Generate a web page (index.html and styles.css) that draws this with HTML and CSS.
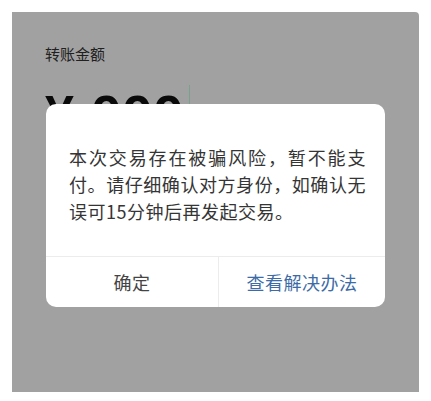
FILE: index.html
```html
<!DOCTYPE html>
<html>
<head>
	<meta charset="utf-8">
	<meta name="viewport" content="width=device-width, initial-scale=1">
	<title>转账</title>
	<link rel="stylesheet" href="styles.css">
</head>
<body>

	<div class="screen">
		<div class="transfer">
			<p class="label">转账金额</p>
			<div class="amount">
				<span class="num">¥ 999</span>
				<span class="cursor"></span>
			</div>
		</div>

		<!-- risk warning dialog -->
		<div class="mask">
			<div class="dialog">
				<div class="message">
					<span class="line full">本次交易存在被骗风险，暂不能支</span>
					<span class="line full">付。请仔细确认对方身份，如确认无</span>
					<span class="line">误可15分钟后再发起交易。</span>
				</div>
				<div class="actions">
					<button class="btn">确定</button>
					<button class="btn primary">查看解决办法</button>
				</div>
			</div>
		</div>
	</div>

</body>
</html>
```

FILE: styles.css
```css
*{
    margin:0;
    padding:0;
    box-sizing: border-box;
}
body{
    background: #fff;
    font-family: "Noto Sans CJK SC", "Noto Sans", sans-serif;
}
.screen{
    position: relative;
    margin: 12px;
    width: 407px;
    height: 380px;
    background: #fff;
    border-top-right-radius: 4px;
    overflow: hidden;
}
.transfer{
    padding: 31px 33px 0;
}
.label{
    font-size: 15px;
    line-height: 22px;
    color: #333;
}
.amount{
    display: flex;
    align-items: flex-start;
    margin-top: 23px;
}
.num{
    font-family: "Liberation Sans", Arial, sans-serif;
    font-weight: bold;
    font-size: 52px;
    line-height: 52px;
    letter-spacing: 2px;
    color: #111;
}
.cursor{
    width: 1px;
    height: 60px;
    margin-top: -3px;
    margin-left: 4px;
    background: rgb(190, 255, 225);
}
.mask{
    position: absolute;
    top: 0;
    left: 0;
    right: 0;
    bottom: 0;
    background: rgba(0, 0, 0, 0.37);
    display: flex;
    justify-content: center;
    align-items: flex-start;
    padding-top: 92px;
}
.dialog{
    width: 339px;
    background: #fff;
    border-radius: 10px;
    overflow: hidden;
}
.message{
    padding: 40px 19px 31px 23px;
    font-size: 18px;
    line-height: 27px;
    letter-spacing: 0.5px;
    color: #353535;
}
.line{
    display: block;
    white-space: nowrap;
}
.line.full{
    text-align: justify;
    text-align-last: justify;
}
.actions{
    display: grid;
    grid-template-columns: 172px 1fr;
    height: 51px;
    border-top: 1px solid #ececec;
}
.btn{
    border: none;
    outline: none;
    background: none;
    font-family: inherit;
    font-size: 18px;
    letter-spacing: 0.5px;
    color: #444;
    cursor: pointer;
}
.btn + .btn{
    border-left: 1px solid #ececec;
}
.btn.primary{
    color: #3d6ba6;
}
```
